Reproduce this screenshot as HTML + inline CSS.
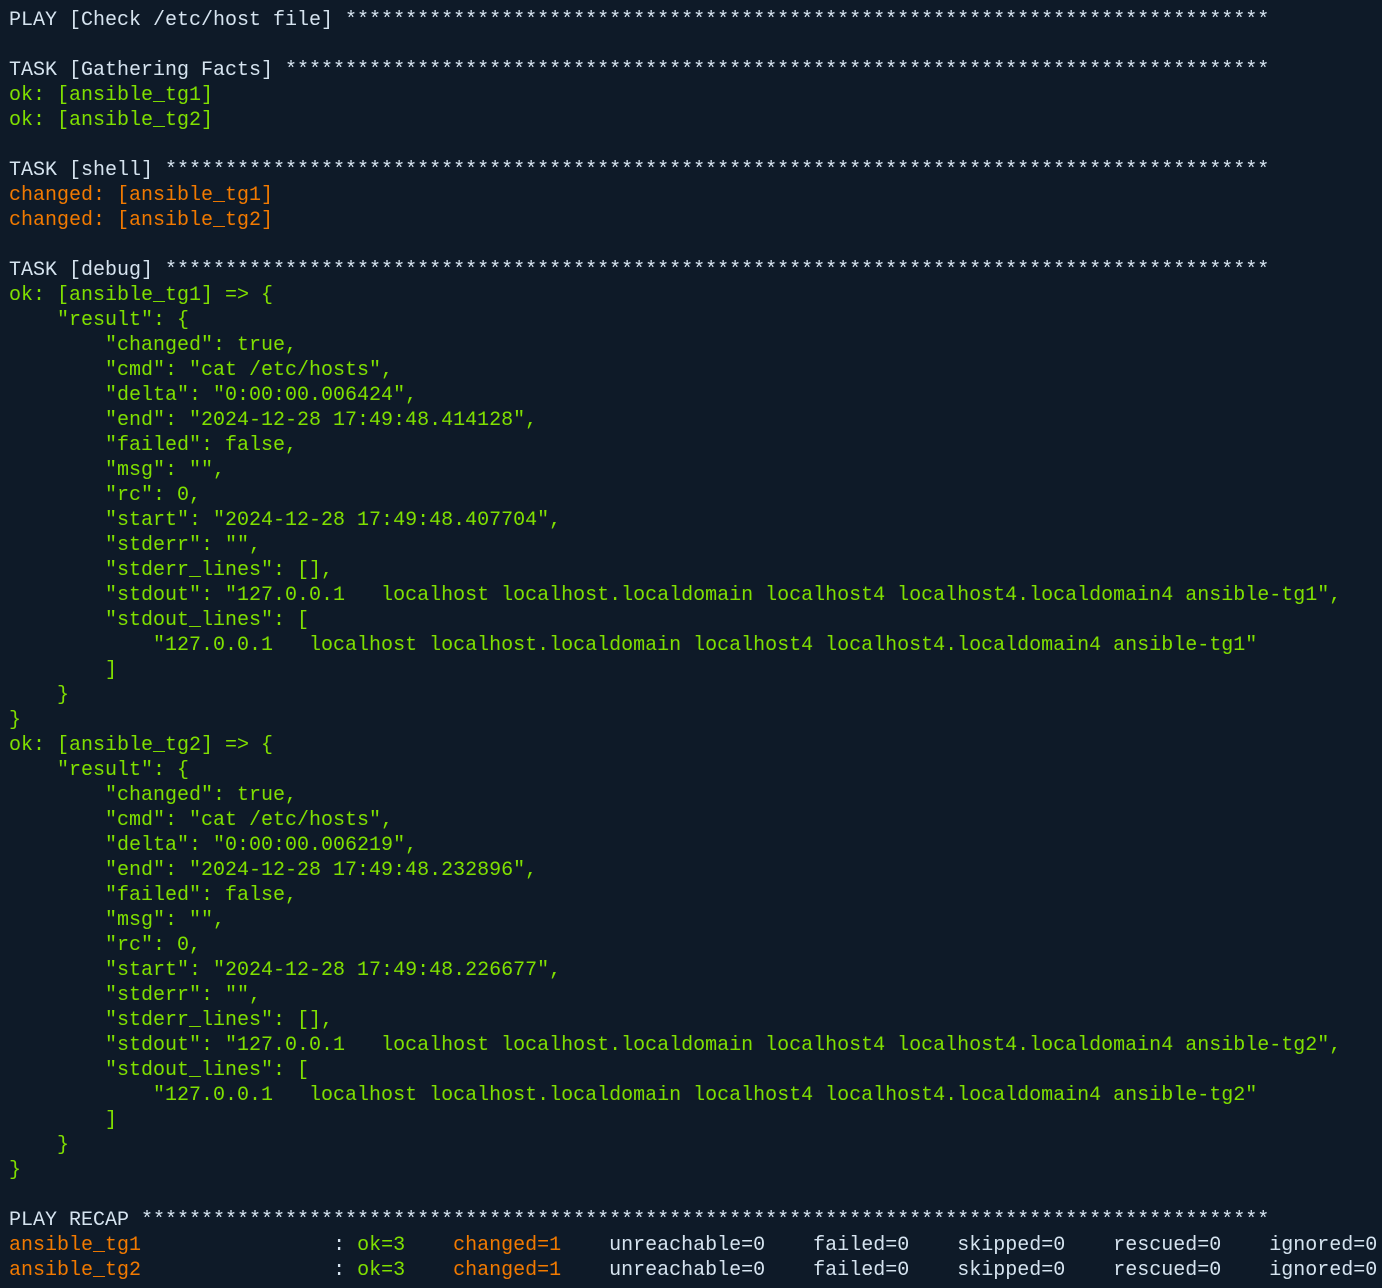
<!DOCTYPE html>
<html><head><meta charset="utf-8"><style>
html,body{margin:0;padding:0;background:#0e1a28;width:1382px;height:1288px;overflow:hidden}
pre{margin:0;padding:8px 0 0 9px;font-family:"Liberation Mono","DejaVu Sans Mono",monospace;font-size:20px;line-height:25px;color:#d6e4f0;white-space:pre}
.g{color:#80e000}.o{color:#f27a00}
</style></head><body><pre>PLAY [Check /etc/host file] *****************************************************************************

TASK [Gathering Facts] **********************************************************************************
<span class="g">ok: [ansible_tg1]
ok: [ansible_tg2]</span>

TASK [shell] ********************************************************************************************
<span class="o">changed: [ansible_tg1]
changed: [ansible_tg2]</span>

TASK [debug] ********************************************************************************************
<span class="g">ok: [ansible_tg1] =&gt; {
    "result": {
        "changed": true,
        "cmd": "cat /etc/hosts",
        "delta": "0:00:00.006424",
        "end": "2024-12-28 17:49:48.414128",
        "failed": false,
        "msg": "",
        "rc": 0,
        "start": "2024-12-28 17:49:48.407704",
        "stderr": "",
        "stderr_lines": [],
        "stdout": "127.0.0.1   localhost localhost.localdomain localhost4 localhost4.localdomain4 ansible-tg1",
        "stdout_lines": [
            "127.0.0.1   localhost localhost.localdomain localhost4 localhost4.localdomain4 ansible-tg1"
        ]
    }
}
ok: [ansible_tg2] =&gt; {
    "result": {
        "changed": true,
        "cmd": "cat /etc/hosts",
        "delta": "0:00:00.006219",
        "end": "2024-12-28 17:49:48.232896",
        "failed": false,
        "msg": "",
        "rc": 0,
        "start": "2024-12-28 17:49:48.226677",
        "stderr": "",
        "stderr_lines": [],
        "stdout": "127.0.0.1   localhost localhost.localdomain localhost4 localhost4.localdomain4 ansible-tg2",
        "stdout_lines": [
            "127.0.0.1   localhost localhost.localdomain localhost4 localhost4.localdomain4 ansible-tg2"
        ]
    }
}</span>

PLAY RECAP **********************************************************************************************
<span class="o">ansible_tg1</span>                : <span class="g">ok=3</span>    <span class="o">changed=1</span>    unreachable=0    failed=0    skipped=0    rescued=0    ignored=0
<span class="o">ansible_tg2</span>                : <span class="g">ok=3</span>    <span class="o">changed=1</span>    unreachable=0    failed=0    skipped=0    rescued=0    ignored=0
</pre></body></html>
